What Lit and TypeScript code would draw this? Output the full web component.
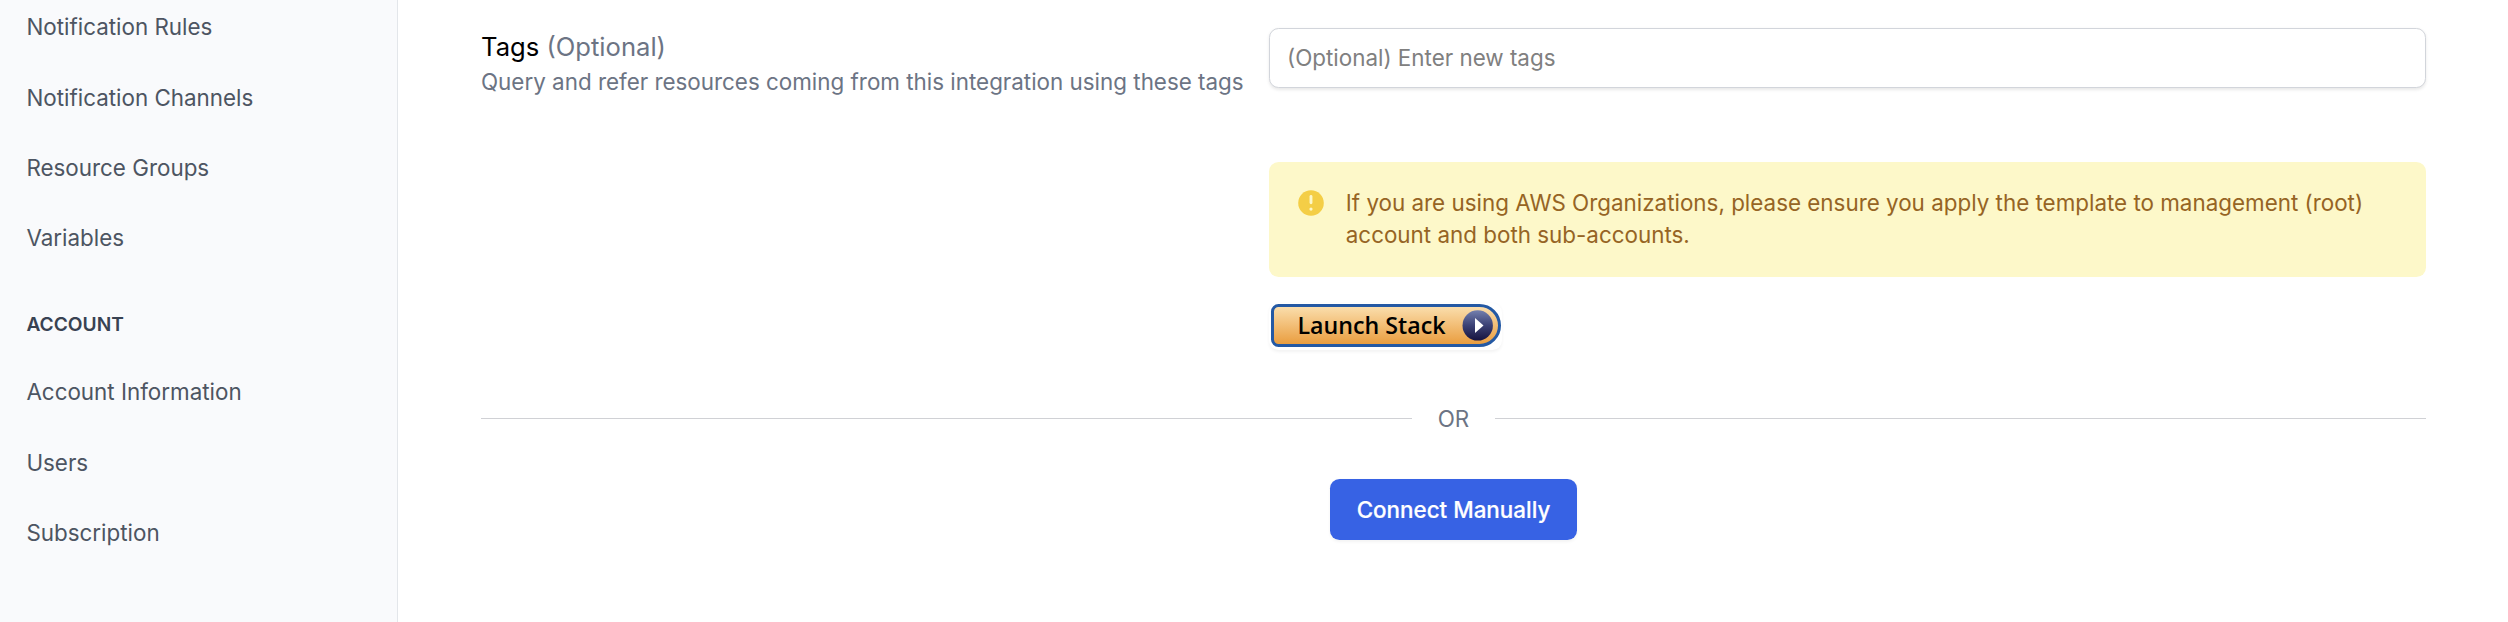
import { LitElement, html, css } from "lit";
import { customElement, property } from "lit/decorators.js";

@customElement("side-nav")
class SideNav extends LitElement {
  static styles = css`
    :host { display: block; box-sizing: border-box; width: 398px; height: 622px; flex: none;
      overflow: hidden; background: #f9fafc; border-right: 1px solid #e3e6ea; }
    .nav { display: flex; flex-direction: column; }
    .item { padding: 19.2px 26.4px; font-size: 22.4px; line-height: 32px; color: #4d5562; text-decoration: none; }
    .item:first-child { padding-top: 11.2px; }
    .heading { margin: 0; padding: 38px 26.4px 20px; font-size: 19.2px; line-height: 25.6px; font-weight: 600; color: #384252; }
  `;
  settings = ["Notification Rules", "Notification Channels", "Resource Groups", "Variables"];
  account = ["Account Information", "Users", "Subscription"];
  render() {
    const link = (label: string) => html`<a class="item">${label}</a>`;
    return html`<nav class="nav">
      ${this.settings.map(link)}
      <h3 class="heading">ACCOUNT</h3>
      ${this.account.map(link)}
    </nav>`;
  }
}

@customElement("info-alert")
class InfoAlert extends LitElement {
  static styles = css`
    :host { display: flex; gap: 19.2px; box-sizing: border-box; height: 115px; padding: 25px 25.6px;
      border-radius: 9.6px; background: #fdf8c9; color: #966424; font-size: 22.4px; line-height: 32px; }
    .icon { width: 32px; height: 32px; flex: none; }
    .text { margin: 0; }
  `;
  @property() message = "";
  render() {
    return html`
      <svg class="icon" viewBox="0 0 20 20">
        <circle cx="10" cy="10" r="8" fill="#f4ce46" />
        <path d="M10 5.9V9.9" stroke="#fdf8c9" stroke-width="1.8" stroke-linecap="round" />
        <circle cx="10" cy="13.8" r="1" fill="#fdf8c9" />
      </svg>
      <p class="text">${this.message}</p>`;
  }
}

@customElement("launch-stack")
class LaunchStack extends LitElement {
  static styles = css`
    :host { display: block; width: 233px; height: 47px; border-radius: 9.6px; background: #fff;
      box-shadow: 0 1.6px 3.2px rgba(0, 0, 0, 0.05); }
    .art { display: block; }
    .label { font: 600 24px "Open Sans", "Noto Sans", sans-serif; }
  `;
  render() {
    return html`<svg class="art" width="233" height="47" viewBox="0 0 233 47">
      <defs>
        <linearGradient id="gold" x1="0" y1="0" x2="0" y2="1">
          <stop offset="0" stop-color="#fbe0b0" /><stop offset="1" stop-color="#e99b3b" />
        </linearGradient>
        <linearGradient id="navy" x1="0" y1="0" x2="0" y2="1">
          <stop offset="0" stop-color="#7480ae" /><stop offset="0.5" stop-color="#3b4175" /><stop offset="1" stop-color="#17133f" />
        </linearGradient>
      </defs>
      <path d="M9.5 2.5H210.5A20 20 0 0 1 210.5 42.5H9.5A6 6 0 0 1 3.5 36.5V8.5A6 6 0 0 1 9.5 2.5Z" fill="url(#gold)" stroke="#2459a4" stroke-width="3" />
      <text class="label" x="28.5" y="31.3" textLength="148" lengthAdjust="spacingAndGlyphs">Launch Stack</text>
      <circle cx="208.7" cy="22.4" r="15.2" fill="url(#navy)" />
      <path d="M206 15V30L214.5 22.5Z" fill="#fff" />
    </svg>`;
  }
}

@customElement("app-root")
class AppRoot extends LitElement {
  static styles = css`
    :host { display: flex; height: 622px; overflow: hidden; background: #fff; font-family: Inter, sans-serif; }
    .main { flex: 1; box-sizing: border-box; padding: 28px 82px 0 83px; }
    .row { display: grid; grid-template-columns: 1fr 1157px; }
    .title { margin: 0; font-size: 25.6px; line-height: 38.4px; font-weight: 400; color: #000; }
    .optional, .hint { color: #6c7484; }
    .hint { margin: 0; font-size: 22.4px; line-height: 32px; white-space: nowrap; }
    .field { display: flex; flex-direction: column; align-items: stretch; }
    .input { box-sizing: border-box; height: 60px; padding: 0 17px 2px; border: 1px solid #d2d5db; border-radius: 9.6px;
      background: #fff; font: 22.4px Inter, sans-serif; box-shadow: 0 1.6px 3.2px rgba(0, 0, 0, 0.09); outline: none; }
    .input::placeholder { color: #808080; opacity: 1; }
    .alert { margin-top: 74px; }
    .launch { margin-top: 26px; }
    .divider { display: flex; align-items: center; gap: 26px; margin-top: 53px; color: #6c7484; font-size: 22.4px; line-height: 32px; }
    .line { flex: 1; height: 1px; margin-bottom: 1px; background: #d0d1d5; }
    .actions { display: flex; justify-content: center; margin-top: 44px; }
    .button { width: 247px; height: 61px; padding: 0; border: 0; border-radius: 9.6px; background: #3762e4; color: #fff;
      font: 500 22.4px Inter, sans-serif; -webkit-text-stroke: 0.2px #fff; box-shadow: 0 1.6px 3.2px rgba(0, 0, 0, 0.05); }
  `;
  render() {
    return html`
      <side-nav></side-nav>
      <main class="main">
        <div class="row">
          <div>
            <h2 class="title">Tags <span class="optional">(Optional)</span></h2>
            <p class="hint">Query and refer resources coming from this integration using these tags</p>
          </div>
          <div class="field">
            <input class="input" placeholder="(Optional) Enter new tags" />
            <info-alert class="alert" message="If you are using AWS Organizations, please ensure you apply the template to management (root) account and both sub-accounts."></info-alert>
            <launch-stack class="launch"></launch-stack>
          </div>
        </div>
        <div class="divider"><span class="line"></span><span>OR</span><span class="line"></span></div>
        <div class="actions"><button class="button">Connect Manually</button></div>
      </main>`;
  }
}
